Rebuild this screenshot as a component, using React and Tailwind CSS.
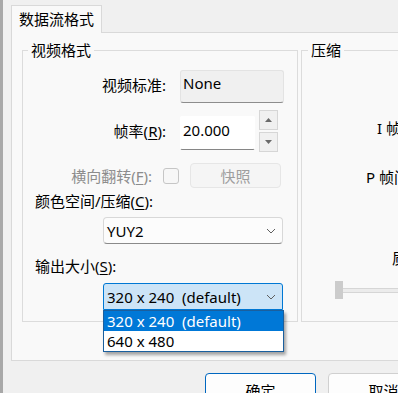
const FONT = { fontFamily: '"Noto Sans", "Noto Sans CJK SC", sans-serif' }

function Chevron() {
  return (
    <svg width="10" height="6" viewBox="0 0 10 6" className="shrink-0">
      <path d="M1 1 L5 5 L9 1" fill="none" stroke="#5f5f5f" strokeWidth="1" />
    </svg>
  )
}

function Tri({ up }) {
  return (
    <svg width="7" height="4" viewBox="0 0 7 4">
      <path d={up ? 'M0 4 L3.5 0 L7 4 Z' : 'M0 0 L3.5 4 L7 0 Z'} fill="#6a6a6a" />
    </svg>
  )
}

function Acc({ children }) {
  return <u className="underline underline-offset-2">{children}</u>
}

function Label({ width, children, gray, className = '' }) {
  return (
    <div
      className={`shrink-0 text-right ${gray ? 'text-[#8c8c8c]' : 'text-black'} ${className}`}
      style={{ width }}
    >
      {children}
    </div>
  )
}

function VideoGroup() {
  return (
    <fieldset className="mt-[7px] h-[282px] w-[276px] shrink-0 border border-[#dcdcdc]">
      <legend className="ml-[5px] px-[3px] leading-[20px]">视频格式</legend>
      <div className="flex flex-col">
        <div className="mt-[10px] flex h-[33px] items-center">
          <Label width={143} className="pb-[4px]">视频标准:</Label>
          <div className="ml-[14px] flex h-[33px] w-[104px] items-center rounded-[3px] border border-[#e3e3e3] border-b-[#8d8d8d] bg-[#f0f0f0] pl-[2px] pb-[8px]">
            None
          </div>
        </div>
        <div className="mt-[7px] flex h-[42px] items-center">
          <Label width={143} className="pb-[1px]">
            帧率(<Acc>R</Acc>):
          </Label>
          <div className="ml-[14px] mt-[3px] flex h-[34px] w-[75px] items-center rounded-[2px] border border-white border-b-[#868686] bg-white pl-[2px] pb-[6px]">
            20.000
          </div>
          <div className="ml-[4px] flex flex-col gap-[2px]">
            <div className="flex h-[20px] w-[19px] items-center justify-center border border-[#d6d6d6] bg-[#f0f0f0]">
              <Tri up />
            </div>
            <div className="flex h-[20px] w-[19px] items-center justify-center border border-[#d6d6d6] bg-[#f0f0f0]">
              <Tri />
            </div>
          </div>
        </div>
        <div className="mt-[11px] flex h-[25px] items-center">
          <Label width={129} gray>
            横向翻转(<Acc>F</Acc>):
          </Label>
          <div className="ml-[11px] h-[16px] w-[16px] rounded-[3px] border border-[#c6c6c6] bg-[#f7f7f7]" />
          <div className="ml-[11px] flex h-[25px] w-[91px] items-center justify-center rounded-[4px] border border-[#e6e6e6] bg-[#f5f5f5] text-[#9e9e9e]">
            快照
          </div>
        </div>
        <div className="mt-[3px] h-[20px] pl-[12px] leading-[20px]">
          颜色空间/压缩(<Acc>C</Acc>):
        </div>
        <div className="mt-[6px] ml-[80px] flex h-[27px] w-[180px] items-center justify-between rounded-[4px] border border-[#d8d8d8] border-b-[#8a8a8a] bg-[#fcfcfc] pl-[3px] pr-[6px]">
          <span>YUY2</span>
          <Chevron />
        </div>
        <div className="mt-[12px] h-[20px] pl-[12px] leading-[20px]">
          输出大小(<Acc>S</Acc>):
        </div>
        <div className="relative mt-[7px] ml-[80px] w-[180px]">
          <div className="flex h-[27px] items-center justify-between rounded-t-[3px] border border-[#0078d4] bg-[#cce4f7] pl-[3px] pr-[6px]">
            <span className="whitespace-pre">320 x 240  (default)</span>
            <Chevron />
          </div>
          <div className="absolute left-0 top-[27px] z-10 w-[181px] border border-[#1a5f9e] bg-white shadow-[2px_3px_3px_rgba(0,0,0,0.35)]">
            <div className="h-[20px] whitespace-pre bg-[#0078d7] pl-[3px] leading-[20px] text-white">
              320 x 240  (default)
            </div>
            <div className="h-[20px] pl-[3px] leading-[20px] text-black">640 x 480</div>
          </div>
        </div>
      </div>
    </fieldset>
  )
}

function CompressGroup() {
  return (
    <fieldset className="ml-[3px] mt-[7px] h-[282px] w-[200px] shrink-0 border border-[#dcdcdc]">
      <legend className="ml-[6px] px-[3px] leading-[20px]">压缩</legend>
      <div className="flex flex-col whitespace-nowrap">
        <div className="ml-[75px] mt-[58px] h-[20px] leading-[20px]">I 帧间隔:</div>
        <div className="ml-[64px] mt-[29px] h-[20px] leading-[20px]">P 帧间隔:</div>
        <div className="ml-[90px] mt-[61px] h-[20px] leading-[20px]">质量:</div>
        <div className="mt-[13px] ml-[33px] flex h-[18px] items-center">
          <div className="h-[18px] w-[8px] bg-[#cccccc]" />
          <div className="h-[5px] w-[150px] border-y border-[#d6d6d6] bg-[#ececec]" />
        </div>
      </div>
    </fieldset>
  )
}

export default function App() {
  return (
    <div
      className="h-[393px] w-[398px] overflow-hidden border-l-[3px] border-[#a8a8a8] bg-[#f0f0f0] text-[15px] leading-[20px] text-black"
      style={FONT}
    >
      <div className="pl-[8px] pt-[5px]">
        <div className="relative z-10 -mb-px flex h-[28px] w-[91px] items-center border border-b-0 border-[#d9d9d9] bg-[#f9f9f9] pl-[7px] pb-[1px]">
          数据流格式
        </div>
        <div className="h-[329px] w-[420px] border border-[#d9d9d9] bg-[#f9f9f9]">
          <div className="flex pl-[10px]">
            <VideoGroup />
            <CompressGroup />
          </div>
        </div>
        <div className="mt-[12px] flex pl-[194px]">
          <div className="flex h-[34px] w-[111px] shrink-0 items-center justify-center rounded-[4px] border border-[#0067c0] bg-[#fdfdfd] pt-[1px]">
            确定
          </div>
          <div className="ml-[12px] flex h-[34px] w-[111px] shrink-0 items-center justify-center rounded-[4px] border border-[#d0d0d0] bg-[#fdfdfd] pt-[1px]">
            取消
          </div>
        </div>
      </div>
    </div>
  )
}
